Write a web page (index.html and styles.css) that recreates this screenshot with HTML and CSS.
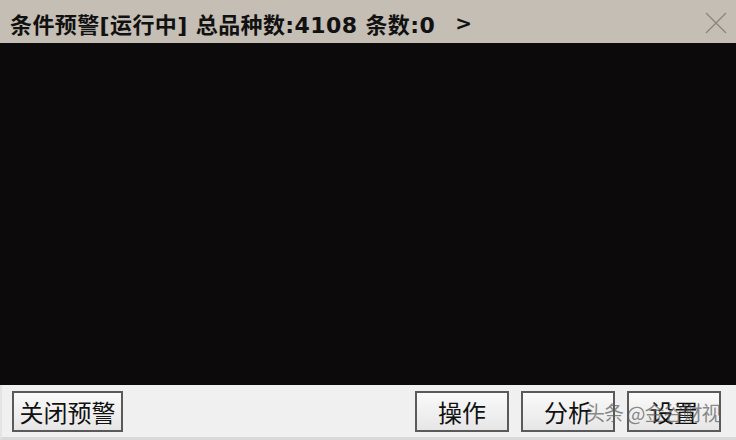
FILE: index.html
```html
<!DOCTYPE html>
<html lang="zh-CN">
<head>
  <meta charset="UTF-8">
  <title>条件预警</title>
  <link rel="stylesheet" href="styles.css">
</head>
<body>
  <div class="window">
    <div class="titlebar">
      <span class="title">条件预警[运行中] 总品种数:4108 条数:0</span>
      <span class="more">&gt;</span>
      <span class="close">
        <svg width="24" height="24" viewBox="0 0 24 24">
          <path d="M2 2 L22 22 M22 2 L2 22" stroke="#8a857e" stroke-width="1.3" fill="none"/>
        </svg>
      </span>
    </div>
    <div class="screen"></div>
    <div class="toolbar">
      <button class="btn wide">关闭预警</button>
      <div class="spacer"></div>
      <button class="btn">操作</button>
      <button class="btn">分析</button>
      <button class="btn">设置</button>
    </div>
    <div class="watermark">头条 @金谷财视</div>
  </div>
</body>
</html>
```

FILE: styles.css
```css
body {
  margin: 0;
  font-family: "Noto Sans CJK SC", "Liberation Sans", sans-serif;
  background-color: #f0f0f0;
}

.window {
  position: relative;
  width: 736px;
  height: 440px;
  display: flex;
  flex-direction: column;
  overflow: hidden;
}

.titlebar {
  height: 43px;
  background-color: #c4beb4;
  display: flex;
  align-items: center;
  padding-left: 10px;
  padding-top: 2px;
  box-sizing: border-box;
  color: #111;
  font-family: "DejaVu Sans", "Noto Sans CJK SC", sans-serif;
  font-weight: bold;
  font-size: 22px;
}

.title {
  letter-spacing: 0.4px;
}

.more {
  margin-left: 20px;
  font-size: 20px;
}

.close {
  margin-left: auto;
  margin-right: 8px;
  display: flex;
}

.screen {
  flex: 1;
  background-color: #0c0a0a;
}

.toolbar {
  height: 55px;
  box-sizing: border-box;
  display: flex;
  align-items: flex-start;
  gap: 12px;
  padding: 6px 15px 0 12px;
  border-bottom: 3px solid #d8d8d8;
  border-left: 2px solid #e4e4e4;
}

.spacer {
  flex: 1;
}

.btn {
  width: 94px;
  height: 41px;
  font-family: "Noto Sans CJK SC", sans-serif;
  font-size: 24px;
  color: #111;
  background: linear-gradient(#fafafa, #e6e6e6);
  border: 2px solid #5a5a5a;
  padding: 0;
  line-height: 1;
}

.btn.wide {
  width: 111px;
  margin-left: -2px;
}

.watermark {
  position: absolute;
  left: 585px;
  top: 398px;
  font-size: 20px;
  color: rgba(90, 90, 90, 0.7);
  letter-spacing: -1px;
}
```
